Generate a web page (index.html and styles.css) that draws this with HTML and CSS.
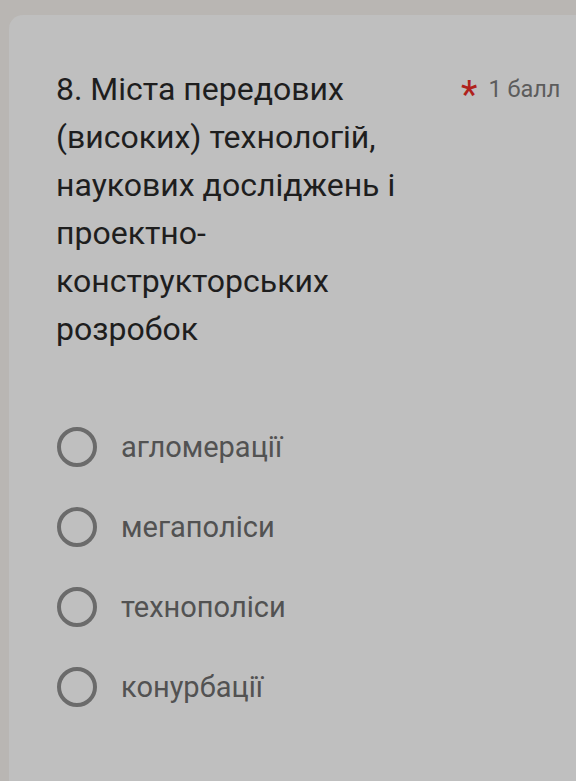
FILE: index.html
```html
<!DOCTYPE html>
<html lang="uk">
<head>
<meta charset="utf-8">
<link rel="stylesheet" href="styles.css">
</head>
<body>
<div class="card">
  <div class="header">
    <div class="title">8. Міста передових (високих) технологій, наукових досліджень і проектно-конструкторських розробок</div>
    <div class="points"><span class="req">*</span><span class="score">1 балл</span></div>
  </div>
  <div class="options">
    <label class="option"><span class="radio"></span><span class="label">агломерації</span></label>
    <label class="option"><span class="radio"></span><span class="label">мегаполіси</span></label>
    <label class="option"><span class="radio"></span><span class="label">технополіси</span></label>
    <label class="option"><span class="radio"></span><span class="label">конурбації</span></label>
  </div>
</div>
</body>
</html>
```
FILE: styles.css
```css
html, body {
  margin: 0;
  padding: 0;
  background: #b9b6b3;
  height: 100%;
  overflow: hidden;
}
body {
  font-family: Roboto, "Noto Sans", sans-serif;
  padding-top: 15px;
  padding-left: 9px;
  box-sizing: border-box;
}
.card {
  background: #bfbfbf;
  border-top-left-radius: 14px;
  height: 100%;
  padding: 50px 0 0 47px;
  box-sizing: border-box;
}
.header {
  display: flex;
  align-items: flex-start;
}
.title {
  width: 385px;
  font-size: 32px;
  line-height: 48px;
  color: #1e1e1e;
}
.points {
  margin-left: 20px;
  display: flex;
  align-items: center;
  height: 48px;
  gap: 11px;
  white-space: nowrap;
}
.req {
  color: #b0221c;
  font-size: 38px;
  line-height: 1;
  position: relative;
  top: 6px;
}
.score {
  font-size: 23.5px;
  color: #5c5c5c;
}
.options {
  margin-top: 54px;
  display: flex;
  flex-direction: column;
}
.option {
  display: flex;
  align-items: center;
  height: 80px;
}
.radio {
  width: 40px;
  height: 40px;
  box-sizing: border-box;
  border: 4px solid #6b6b6b;
  border-radius: 50%;
  margin-left: 1px;
  margin-right: 24px;
  flex: none;
}
.label {
  font-size: 29px;
  color: #525252;
}
```
